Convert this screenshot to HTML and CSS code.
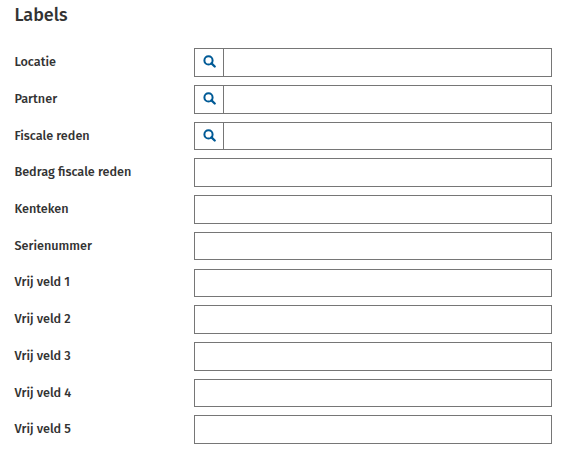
FILE: index.html
```html
<!DOCTYPE html>
<html lang="nl">
<head>
<meta charset="utf-8">
<title>Labels</title>
<link rel="stylesheet" href="styles.css">
</head>
<body>
<svg class="symbols" aria-hidden="true">
  <symbol id="search" viewBox="0 0 13 13">
    <circle cx="5.5" cy="5.4" r="4.1" fill="none" stroke="currentColor" stroke-width="2"/>
    <path d="M8.5 8.4 L11.7 11.5" fill="none" stroke="currentColor" stroke-width="2.3" stroke-linecap="round"/>
  </symbol>
</svg>
<form class="panel">
  <h2 class="title">Labels</h2>
  <div class="rows">
    <div class="row"><label class="label">Locatie</label><div class="field"><span class="lookup"><svg class="icon"><use href="#search"/></svg></span></div></div>
    <div class="row"><label class="label">Partner</label><div class="field"><span class="lookup"><svg class="icon"><use href="#search"/></svg></span></div></div>
    <div class="row"><label class="label">Fiscale reden</label><div class="field"><span class="lookup"><svg class="icon"><use href="#search"/></svg></span></div></div>
    <div class="row"><label class="label">Bedrag fiscale reden</label><div class="field"></div></div>
    <div class="row"><label class="label">Kenteken</label><div class="field"></div></div>
    <div class="row"><label class="label">Serienummer</label><div class="field"></div></div>
    <div class="row"><label class="label">Vrij veld 1</label><div class="field"></div></div>
    <div class="row"><label class="label">Vrij veld 2</label><div class="field"></div></div>
    <div class="row"><label class="label">Vrij veld 3</label><div class="field"></div></div>
    <div class="row"><label class="label">Vrij veld 4</label><div class="field"></div></div>
    <div class="row"><label class="label">Vrij veld 5</label><div class="field"></div></div>
  </div>
</form>
</body>
</html>
```
FILE: styles.css
```css
* { box-sizing: border-box; }
body {
  margin: 0;
  background: #fff;
  color: #333;
  font-family: "Fira Sans", "Noto Sans", sans-serif;
}
.symbols { display: none; }
.panel { padding: 4px 13px 0 14.4px; }
.title {
  margin: 0 0 20.22px;
  height: 24px;
  line-height: 22px;
  font-size: 18px;
  font-weight: 500;
}
.rows { display: grid; row-gap: 8.08px; }
.row {
  display: grid;
  grid-template-columns: 179.6px 1fr;
  height: 28.641px;
}
.label {
  margin-top: -0.09px;
  font-size: 12.67px;
  font-weight: 500;
  line-height: 27px;
  white-space: nowrap;
}
.field {
  display: flex;
  border: 1px solid #767676;
  background: #fff;
}
.lookup {
  display: flex;
  width: 29px;
  padding-top: 6px;
  padding-left: 8px;
  align-items: flex-start;
  border-right: 1px solid #767676;
  color: #005a96;
}
.icon { width: 13px; height: 13px; }
```
